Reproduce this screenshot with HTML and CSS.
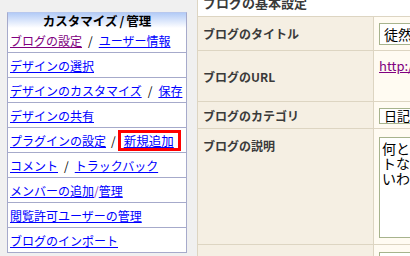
FILE: index.html
```html
<!DOCTYPE html>
<html lang="ja">
<head>
<meta charset="utf-8">
<title>ブログの基本設定</title>
<link rel="stylesheet" href="styles.css">
</head>
<body>
<div class="page">
  <nav class="side">
    <div class="side-head">カスタマイズ<span class="sep-h">/</span>管理</div>
    <div class="side-row"><a class="visited" href="#">ブログの設定</a><span class="sep">/</span><a href="#">ユーザー情報</a></div>
    <div class="side-row"><a href="#">デザインの選択</a></div>
    <div class="side-row"><a href="#">デザインのカスタマイズ</a><span class="sep">/</span><a href="#">保存</a></div>
    <div class="side-row"><a href="#">デザインの共有</a></div>
    <div class="side-row"><a href="#">プラグインの設定</a><span class="sep narrow">/</span><span class="mark"><a href="#">新規追加</a></span></div>
    <div class="side-row"><a href="#">コメント</a><span class="sep">/</span><a href="#">トラックバック</a></div>
    <div class="side-row"><a href="#">メンバーの追加</a><span class="sep tight">/</span><a href="#">管理</a></div>
    <div class="side-row"><a href="#">閲覧許可ユーザーの管理</a></div>
    <div class="side-row"><a href="#">ブログのインポート</a></div>
  </nav>
  <main class="main">
    <div class="main-head">ブログの基本設定</div>
    <div class="row r-title">
      <div class="label mid">ブログのタイトル</div>
      <div class="value"><div class="field f-title">徒然なるままに</div></div>
    </div>
    <div class="row r-url">
      <div class="label mid">ブログのURL</div>
      <div class="value"><a class="url" href="#">http://example.blog.jp/</a></div>
    </div>
    <div class="row r-cat">
      <div class="label mid">ブログのカテゴリ</div>
      <div class="value"><div class="field f-cat">日記</div></div>
    </div>
    <div class="row r-desc">
      <div class="label top">ブログの説明</div>
      <div class="value"><div class="field f-desc">何となく日々の出来事を綴るブログです。<br>トなど気まぐれに更新します。<br>いわゆる雑記帳です。</div></div>
    </div>
    <div class="row r-next">
      <div class="label"></div>
      <div class="value"><div class="field f-next"></div></div>
    </div>
  </main>
</div>
</body>
</html>
```
FILE: styles.css
```css
html, body {
  margin: 0;
  padding: 0;
}
body {
  width: 410px;
  height: 256px;
  overflow: hidden;
  background: #f0f0f0;
  font-family: "Noto Sans CJK JP", "Noto Sans", sans-serif;
  font-size: 12px;
  color: #000;
}
.page {
  display: flex;
  align-items: flex-start;
  gap: 10px;
  padding-left: 7px;
}
.side {
  margin-top: 12px;
  width: 180px;
  flex-shrink: 0;
  box-sizing: border-box;
  border: 1px solid #a6aacb;
  border-top-color: #b8c8ee;
  background: #fff;
}
.side-head {
  height: 15px;
  line-height: 15px;
  text-align: center;
  font-weight: bold;
  font-size: 12.5px;
  background: linear-gradient(#b3cbf7, #ffffff);
}
.sep-h {
  margin: 0 2px;
}
.side-row {
  box-sizing: content-box;
  border-bottom: 1px solid #a6aacb;
  padding-left: 2px;
  display: flex;
  align-items: center;
  padding-top: 2px;
  height: 22px;
  white-space: nowrap;
  line-height: 16px;
  font-size: 12px;
}
.side-row:last-child {
  border-bottom: none;
}
.side a {
  color: #0000ff;
  text-decoration: underline;
}
.side a.visited {
  color: #800080;
}
.sep {
  margin: 0 6px;
  color: #000;
}
.sep.narrow {
  margin: 0 2px 0 5px;
}
.sep.tight {
  margin: 0;
  color: #8a3cc8;
}
.mark {
  border: 3px solid #ff0000;
  padding: 0 4px 0 3px;
  margin-top: -1px;
  height: 15px;
  line-height: 15px;
  display: flex;
  align-items: center;
  font-size: 12.5px;
}
.main {
  margin-top: -10px;
  width: 420px;
  flex-shrink: 0;
  border-left: 1px solid #ddd5c2;
  color: #3a3a3a;
}
.main-head {
  height: 26px;
  line-height: 26px;
  padding-left: 5px;
  font-weight: bold;
  font-size: 13px;
  background: #fff;
  border-bottom: 1px solid #ddd5c2;
}
.row {
  display: grid;
  grid-template-columns: 175px 1fr;
  border-bottom: 1px solid #ddd5c2;
}
.label {
  background: #f5efe3;
  font-weight: bold;
  font-size: 12px;
  padding-left: 5px;
  display: flex;
}
.label.mid {
  align-items: center;
}
.label.top {
  align-items: flex-start;
  padding-top: 8px;
}
.value {
  background: #fffbf2;
  border-left: 1px solid #ddd5c2;
  padding-left: 5px;
  overflow: hidden;
}
.r-title { height: 33px; }
.r-url { height: 50px; }
.r-cat { height: 26px; }
.r-desc { height: 115px; }
.r-next { height: 30px; }
.r-title .value { padding-top: 6px; }
.r-url .value { padding-top: 6px; }
.r-cat .value { padding-top: 6px; }
.r-desc .value { padding-top: 8px; }
.r-next .value { padding-top: 7px; }
.field {
  box-sizing: border-box;
  width: 200px;
  border: 1px solid #a7b38d;
  background: #fff;
  color: #000;
  font-size: 13px;
  white-space: nowrap;
  overflow: hidden;
  font-weight: normal;
}
.f-title {
  height: 22px;
  line-height: 20px;
  padding-left: 4px;
  font-size: 14px;
}
.f-cat {
  height: 16px;
  line-height: 14px;
  padding-left: 4px;
}
.f-desc {
  height: 101px;
  padding: 3px 2px;
  line-height: 15px;
  font-size: 14px;
}
.f-next {
  height: 20px;
}
.url {
  color: #800080;
  text-decoration: underline;
  font-size: 13px;
  line-height: 16px;
}
```
